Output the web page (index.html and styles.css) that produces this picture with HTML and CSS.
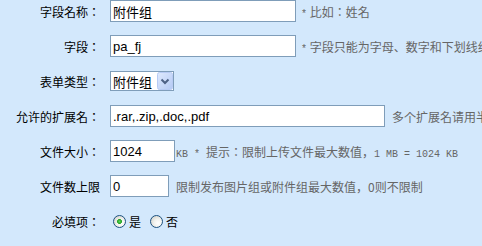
FILE: index.html
```html
<!DOCTYPE html>
<html lang="zh-CN">
<head>
    <meta charset="UTF-8">
    <title>字段设置</title>
    <link rel="stylesheet" href="styles.css">
</head>
<body>
    <div class="form">
        <div class="row">
            <label class="label">字段名称：</label>
            <input type="text" class="text name" value="附件组">
            <span class="tip"><span class="mono">*</span> 比如：姓名</span>
        </div>
        <div class="row">
            <label class="label">字段：</label>
            <input type="text" class="text name" value="pa_fj">
            <span class="tip"><span class="mono">*</span> 字段只能为字母、数字和下划线组成</span>
        </div>
        <div class="row">
            <label class="label">表单类型：</label>
            <span class="select">
                <select>
                    <option>附件组</option>
                </select>
                <svg class="arrow" width="16" height="18" viewBox="0 0 16 18">
                    <defs>
                        <linearGradient id="btn" x1="0" y1="0" x2="1" y2="1">
                            <stop offset="0" stop-color="#dfeafe"/>
                            <stop offset="1" stop-color="#b4c9f4"/>
                        </linearGradient>
                    </defs>
                    <rect x="0.5" y="0.5" width="15" height="17" rx="2" fill="url(#btn)" stroke="#b8cbf4"/>
                    <path d="M4.5 7.5 L8 11 L11.5 7.5" fill="none" stroke="#4d6185" stroke-width="2"/>
                </svg>
            </span>
        </div>
        <div class="row">
            <label class="label">允许的扩展名：</label>
            <input type="text" class="text ext" value=".rar,.zip,.doc,.pdf">
            <span class="tip wide">多个扩展名请用半角逗号隔开</span>
        </div>
        <div class="row">
            <label class="label">文件大小：</label>
            <input type="text" class="text size" value="1024">
            <span class="tip near"><span class="mono">KB * </span>提示：限制上传文件最大数值，<span class="mono">1 MB = 1024 KB</span></span>
        </div>
        <div class="row">
            <label class="label">文件数上限</label>
            <input type="text" class="text count" value="0">
            <span class="tip wide">限制发布图片组或附件组最大数值，0则不限制</span>
        </div>
        <div class="row">
            <label class="label">必填项：</label>
            <span class="radios">
                <label class="choice"><input type="radio" name="required" checked>是</label>
                <label class="choice"><input type="radio" name="required">否</label>
            </span>
        </div>
    </div>
</body>
</html>
```

FILE: styles.css
```css
html, body {
    margin: 0;
    overflow: hidden;
}

body {
    background-color: #d3e8fc;
    font-family: "Noto Sans CJK JP", sans-serif;
    font-feature-settings: "locl" 0;
    font-size: 12px;
    color: #000;
}

.form {
    display: flex;
    flex-direction: column;
    gap: 13px;
    white-space: nowrap;
}

.row {
    display: flex;
    align-items: center;
    height: 22px;
}

.row > * {
    flex: none;
}

.label {
    width: 100px;
    margin-right: 10px;
    text-align: right;
}

.text {
    box-sizing: border-box;
    height: 22px;
    margin: 0;
    padding: 0 2px;
    border: 1px solid #7f9db9;
    background: #fff;
    font-family: "Liberation Sans", "Noto Sans CJK SC", sans-serif;
    font-size: 13px;
    color: #000;
    outline: none;
}

.name { width: 186px; }
.ext { width: 275px; }
.size { width: 65px; }
.count { width: 59px; }

.tip {
    margin-left: 5px;
    color: #666;
}

.tip.wide { margin-left: 7px; }
.tip.near { margin-left: 1px; }

.mono {
    font-family: "Liberation Mono", monospace;
    font-size: 10px;
}

.select {
    position: relative;
    display: inline-block;
    height: 20px;
}

.select select {
    box-sizing: border-box;
    width: 64px;
    height: 20px;
    margin: 0;
    padding: 0 0 0 2px;
    border: 1px solid #7f9db9;
    border-radius: 0;
    background: #fff;
    font-family: "Noto Sans CJK SC", sans-serif;
    font-size: 13px;
    color: #000;
    appearance: none;
    -webkit-appearance: none;
}

.arrow {
    position: absolute;
    right: 1px;
    top: 1px;
    pointer-events: none;
}

.radios {
    display: flex;
    align-items: center;
    margin-left: 3px;
}

.choice {
    display: flex;
    align-items: center;
    margin-right: 9px;
    font-size: 12px;
}

.choice input {
    appearance: none;
    -webkit-appearance: none;
    box-sizing: border-box;
    width: 13px;
    height: 13px;
    margin: 0 3px 0 0;
    border: 1px solid #1c5180;
    border-radius: 50%;
    background: radial-gradient(circle at 65% 65%, #ffffff 0%, #f2f2ee 40%, #c9c9c0 100%);
}

.choice input:checked {
    background: radial-gradient(circle, #5fd85f 0%, #21a121 28%, transparent 32%),
                radial-gradient(circle at 65% 65%, #ffffff 0%, #f2f2ee 40%, #c9c9c0 100%);
}
```
